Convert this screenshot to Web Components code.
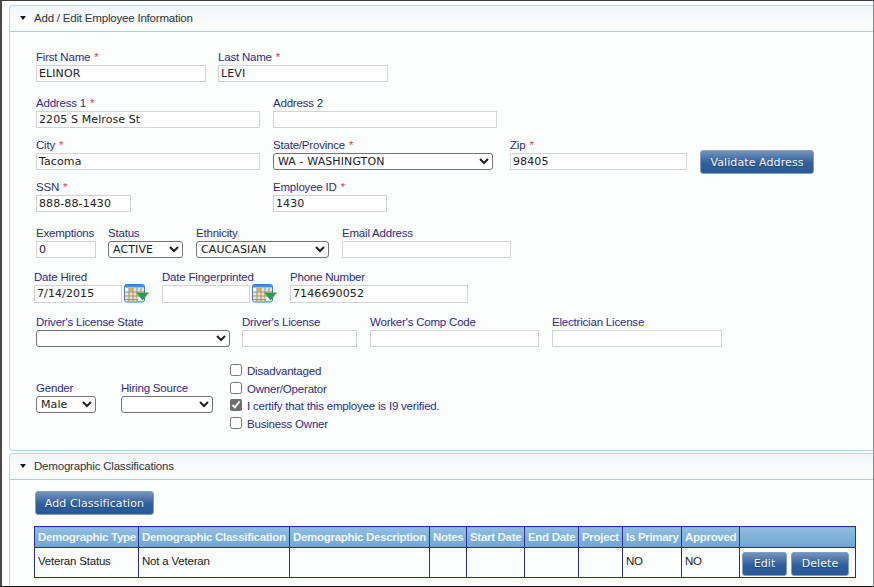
<!DOCTYPE html>
<html>
<head>
<meta charset="utf-8">
<title>Add / Edit Employee</title>
<style>
  html, body { margin: 0; padding: 0; height: 100%; overflow: hidden; background: #fff; }
  body { font-family: "Liberation Sans", Arial, sans-serif; font-size: 11.5px; letter-spacing: -0.2px; }
</style>
</head>
<body>
<screen-frame>
  <app-panel title="Add / Edit Employee Information" style="--body-height: 418px; --head-pad: 2px">
    <form-row style="--top: 18px; --gap: 12px">
      <text-field label="First Name" required width="170">ELINOR</text-field>
      <text-field label="Last Name" required width="170">LEVI</text-field>
    </form-row>
    <form-row style="--top: 14px; --gap: 13px">
      <text-field label="Address 1" required width="224">2205 S Melrose St</text-field>
      <text-field label="Address 2" width="224"></text-field>
    </form-row>
    <form-row style="--top: 10px; --gap: 13px">
      <text-field label="City" required width="224">Tacoma</text-field>
      <select-field label="State/Province" required width="220" value="WA - WASHINGTON"></select-field>
      <text-field label="Zip" required width="177" style="margin-left: 4px">98405</text-field>
      <app-button style="margin: 12px 0 -4px 0; --w: 114px; --h: 24px">Validate Address</app-button>
    </form-row>
    <form-row style="--top: 10px; --gap: 12px">
      <text-field label="SSN" required width="95">888-88-1430</text-field>
      <text-field label="Employee ID" required width="114" style="margin-left: 130px">1430</text-field>
    </form-row>
    <form-row style="--top: 14px; --gap: 12px">
      <text-field label="Exemptions" width="60">0</text-field>
      <select-field label="Status" width="75" value="ACTIVE"></select-field>
      <select-field label="Ethnicity" width="133" value="CAUCASIAN" style="margin-left: 1px"></select-field>
      <text-field label="Email Address" width="169" style="margin-left: 1px"></text-field>
    </form-row>
    <form-row style="--top: 12px; --gap: 2px; --left: -2px; --box-h: 18px">
      <text-field label="Date Hired" width="88">7/14/2015</text-field>
      <cal-icon></cal-icon>
      <text-field label="Date Fingerprinted" width="88" style="margin-left: 11px"></text-field>
      <cal-icon></cal-icon>
      <text-field label="Phone Number" width="178" style="margin-left: 11px">7146690052</text-field>
    </form-row>
    <form-row style="--top: 12px; --gap: 12px">
      <select-field label="Driver's License State" width="194"></select-field>
      <text-field label="Driver's License" width="115"></text-field>
      <text-field label="Worker's Comp Code" width="169" style="margin-left: 1px"></text-field>
      <text-field label="Electrician License" width="170" style="margin-left: 1px"></text-field>
    </form-row>
    <form-row style="--top: 15px; --gap: 25px">
      <select-field label="Gender" width="60" value="Male" style="margin-top: 19px"></select-field>
      <select-field label="Hiring Source" width="92" style="margin-top: 19px"></select-field>
      <check-list style="margin-left: -8px">
        <check-item>Disadvantaged</check-item>
        <check-item>Owner/Operator</check-item>
        <check-item checked>I certify that this employee is I9 verified.</check-item>
        <check-item>Business Owner</check-item>
      </check-list>
    </form-row>
  </app-panel>
  <app-panel title="Demographic Classifications" style="--body-height: auto; --head-pad: 1px; margin-top: 2px">
    <div style="padding: 11px 0 11px 0; margin-left: -1px"><app-button style="--w: 119px; --h: 24px">Add Classification</app-button></div>
    <classification-table></classification-table>
  </app-panel>
</screen-frame>

<script>
const frameTemplate = document.createElement("template");
frameTemplate.innerHTML = `
  <style>
    :host {
      display: block;
      box-sizing: border-box;
      width: 874px;
      height: 587px;
      overflow: hidden;
      border-style: solid;
      border-color: #3c3c3c #8a8a8a #111 #4a4a4a;
      border-width: 1px 1px 1px 2px;
      padding: 4px 0 0 7px;
      background: #fff;
    }
  </style>
  <slot></slot>
`;

class ScreenFrame extends HTMLElement {
  constructor() {
    super();
    this.attachShadow({ mode: "open" });
    this.shadowRoot.appendChild(frameTemplate.content.cloneNode(true));
  }
}

const panelTemplate = document.createElement("template");
panelTemplate.innerHTML = `
  <style>
    :host {
      display: block;
      box-sizing: border-box;
      border: 1px solid #b5d5ee;
      border-radius: 4px 0 0 4px;
      border-right: 0;
      background: #fcfefe;
      color: #333;
    }
    .head {
      display: flex;
      align-items: center;
      box-sizing: border-box;
      height: 26px;
      padding-left: 10px;
      padding-bottom: var(--head-pad, 0);
      gap: 8px;
      font-size: 11.5px;
      color: #2f3640;
      background: linear-gradient(#f3f6f8, #fbfcfc);
      border-bottom: 1px solid #a9cdea;
      border-radius: 4px 0 0 0;
    }
    .arrow {
      width: 0;
      height: 0;
      border-left: 3.5px solid transparent;
      border-right: 3.5px solid transparent;
      border-top: 4px solid #111;
    }
    .body {
      height: var(--body-height, auto);
      padding-left: 26px;
      box-sizing: border-box;
      overflow: hidden;
    }
  </style>
  <div class="head"><span class="arrow"></span><span id="title"></span></div>
  <div class="body"><slot></slot></div>
`;

class AppPanel extends HTMLElement {
  constructor() {
    super();
    this.attachShadow({ mode: "open" });
    this.shadowRoot.appendChild(panelTemplate.content.cloneNode(true));
  }

  connectedCallback() {
    this.shadowRoot.getElementById("title").textContent = this.getAttribute("title");
    this.removeAttribute("title");
  }
}

const rowTemplate = document.createElement("template");
rowTemplate.innerHTML = `
  <style>
    :host {
      display: flex;
      align-items: flex-start;
      gap: var(--gap, 12px);
      margin-top: var(--top, 10px);
      margin-left: var(--left, 0);
    }
  </style>
  <slot></slot>
`;

class FormRow extends HTMLElement {
  constructor() {
    super();
    this.attachShadow({ mode: "open" });
    this.shadowRoot.appendChild(rowTemplate.content.cloneNode(true));
  }
}

const labelStyles = `
  :host { display: block; flex: none; }
  label {
    display: block;
    height: 15px;
    line-height: 15px;
    font-size: 11.5px;
    color: #2d2d8c;
    white-space: nowrap;
  }
  .req { color: #e8384f; margin-left: 1px; }
`;

function labelMarkup(host) {
  const req = host.hasAttribute("required") ? '<span class="req">*</span>' : "";
  return `<label>${host.getAttribute("label")} ${req}</label>`;
}

class TextField extends HTMLElement {
  constructor() {
    super();
    this.attachShadow({ mode: "open" });
  }

  connectedCallback() {
    const width = this.getAttribute("width");
    this.shadowRoot.innerHTML = `
      <style>
        ${labelStyles}
        :host { width: ${width}px; }
        .box {
          box-sizing: border-box;
          width: ${width}px;
          height: var(--box-h, 17px);
          padding-left: 2px;
          border: 1px solid #d4d4d4;
          background: #fff;
          font: 11px/15px "DejaVu Sans", Verdana, sans-serif;
          letter-spacing: 0.1px;
          color: #222;
          white-space: nowrap;
          overflow: hidden;
        }
      </style>
      ${labelMarkup(this)}
      <div class="box"><slot></slot></div>
    `;
  }
}

class SelectField extends HTMLElement {
  constructor() {
    super();
    this.attachShadow({ mode: "open" });
  }

  connectedCallback() {
    const width = this.getAttribute("width");
    const value = this.getAttribute("value") || "";
    this.shadowRoot.innerHTML = `
      <style>
        ${labelStyles}
        :host { width: ${width}px; }
        select {
          display: block;
          box-sizing: border-box;
          width: ${width}px;
          height: 17px;
          margin: 0;
          padding: 0;
          border: 1px solid #767676;
          border-radius: 3px;
          background-color: #fff;
          font: 11px "DejaVu Sans", Verdana, sans-serif;
          letter-spacing: 0.1px;
          color: #222;
        }
      </style>
      ${labelMarkup(this)}
      <select><option>${value}</option></select>
    `;
  }
}

const buttonTemplate = document.createElement("template");
buttonTemplate.innerHTML = `
  <style>
    :host { display: inline-block; flex: none; }
    button {
      display: block;
      box-sizing: border-box;
      width: var(--w, auto);
      height: var(--h, 24px);
      padding: 0;
      border: 1px solid #7fa0c6;
      border-radius: 3px;
      background: linear-gradient(#7393bb, #2f5f9e 55%, #2a5896);
      color: #f4f7fb;
      font: 11px "DejaVu Sans", Verdana, sans-serif;
      letter-spacing: 0.1px;
      text-shadow: 0 1px 1px rgba(0, 0, 0, 0.3);
    }
  </style>
  <button type="button"><slot></slot></button>
`;

class AppButton extends HTMLElement {
  constructor() {
    super();
    this.attachShadow({ mode: "open" });
    this.shadowRoot.appendChild(buttonTemplate.content.cloneNode(true));
  }
}

const calTemplate = document.createElement("template");
calTemplate.innerHTML = `
  <style>
    :host { display: block; flex: none; margin-top: 14px; width: 25px; height: 19px; }
    svg { display: block; }
  </style>
  <svg width="25" height="19" viewBox="0 0 25 19">
    <rect x="0.5" y="0.5" width="20" height="17.5" rx="2" fill="#f7f8fa" stroke="#3b78c4"/>
    <rect x="1" y="1" width="19" height="2.5" fill="#4d8bd6"/>
    <rect x="5" y="4" width="4" height="4" fill="#f2b13c"/>
    <rect x="9" y="4" width="11" height="4" fill="#d8e0ea"/>
    <rect x="2" y="8" width="11" height="9" fill="#f3dcae"/>
    <path d="M1 8H20M1 12H16M1 15.5H14M5 4V18M9 4V18M13 4V18M17 4V8" stroke="#9b9686" stroke-width="1" fill="none"/>
    <path d="M12 8.5H25L18.5 16.5Z" fill="#2f9e46"/>
  </svg>
`;

class CalIcon extends HTMLElement {
  constructor() {
    super();
    this.attachShadow({ mode: "open" });
    this.shadowRoot.appendChild(calTemplate.content.cloneNode(true));
  }
}

const checkListTemplate = document.createElement("template");
checkListTemplate.innerHTML = `
  <style>
    :host { display: flex; flex-direction: column; gap: 0; flex: none; }
  </style>
  <slot></slot>
`;

class CheckList extends HTMLElement {
  constructor() {
    super();
    this.attachShadow({ mode: "open" });
    this.shadowRoot.appendChild(checkListTemplate.content.cloneNode(true));
  }
}

class CheckItem extends HTMLElement {
  constructor() {
    super();
    this.attachShadow({ mode: "open" });
  }

  connectedCallback() {
    const checked = this.hasAttribute("checked") ? "checked" : "";
    this.shadowRoot.innerHTML = `
      <style>
        :host {
          display: flex;
          align-items: center;
          height: 17.7px;
          gap: 5px;
          font-size: 11.5px;
          color: #2d2d8c;
          white-space: nowrap;
        }
        input { margin: 0 0 2px 0; width: 12px; height: 12px; accent-color: #6f6f6f; }
      </style>
      <input type="checkbox" ${checked}><span><slot></slot></span>
    `;
  }
}

const tableTemplate = document.createElement("template");
tableTemplate.innerHTML = `
  <style>
    :host { display: block; margin-left: -2px; width: 821px; padding-bottom: 20px; }
    table {
      table-layout: fixed;
      width: 821px;
      border-collapse: collapse;
      font-size: 11.5px;
      color: #222;
    }
    th, td { border: 1px solid #2c2c9c; padding: 0 0 0 3px; text-align: left; white-space: nowrap; overflow: hidden; }
    th {
      height: 20px;
      padding-left: 3px;
      font-weight: bold;
      letter-spacing: -0.3px;
      color: #eef5fb;
      background: linear-gradient(#92bddf, #6ea6d3);
    }
    td { height: 30px; padding-bottom: 4px; box-sizing: border-box; }
    td.actions { padding: 2px 0 0 2px; }
    .btns { display: flex; gap: 4px; }
  </style>
  <table>
    <colgroup>
      <col style="width:104px"><col style="width:151px"><col style="width:140px"><col style="width:37px">
      <col style="width:58px"><col style="width:54px"><col style="width:44px"><col style="width:59px">
      <col style="width:58px"><col style="width:116px">
    </colgroup>
    <thead>
      <tr>
        <th>Demographic Type</th><th>Demographic Classification</th><th>Demographic Description</th>
        <th>Notes</th><th>Start Date</th><th>End Date</th><th>Project</th><th>Is Primary</th><th>Approved</th><th></th>
      </tr>
    </thead>
    <tbody>
      <tr>
        <td>Veteran Status</td><td>Not a Veteran</td><td></td><td></td><td></td><td></td><td></td>
        <td>NO</td><td>NO</td>
        <td class="actions"><div class="btns">
          <app-button style="--w: 45px; --h: 24px">Edit</app-button>
          <app-button style="--w: 58px; --h: 24px">Delete</app-button>
        </div></td>
      </tr>
    </tbody>
  </table>
`;

class ClassificationTable extends HTMLElement {
  constructor() {
    super();
    this.attachShadow({ mode: "open" });
    this.shadowRoot.appendChild(tableTemplate.content.cloneNode(true));
  }
}

customElements.define("screen-frame", ScreenFrame);
customElements.define("app-panel", AppPanel);
customElements.define("form-row", FormRow);
customElements.define("text-field", TextField);
customElements.define("select-field", SelectField);
customElements.define("app-button", AppButton);
customElements.define("cal-icon", CalIcon);
customElements.define("check-list", CheckList);
customElements.define("check-item", CheckItem);
customElements.define("classification-table", ClassificationTable);
</script>
</body>
</html>
